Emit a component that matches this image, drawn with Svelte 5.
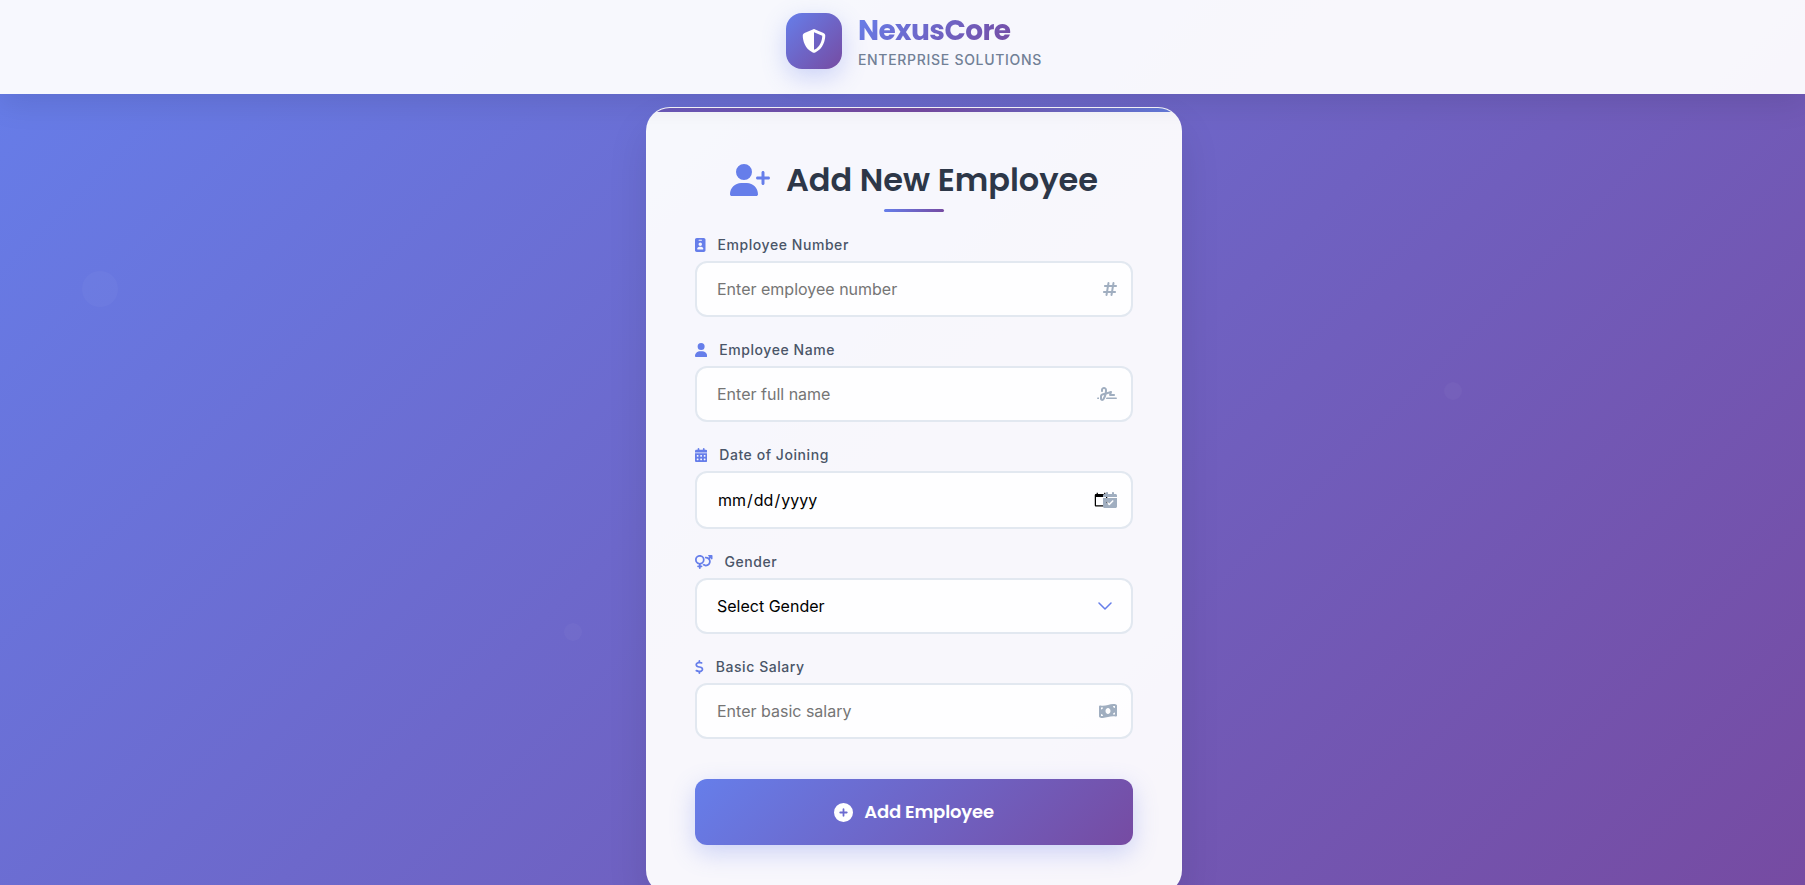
<script>
  const icons = {
    shield: { w: 512, d: 'M256 0c4.6 0 9.2 1 13.4 2.9L457.7 82.8c22 9.3 38.4 31 38.3 57.2c-.5 99.2-41.3 280.7-213.6 363.2c-16.7 8-36.1 8-52.8 0C57.3 420.7 16.5 239.2 16 140c-.1-26.2 16.3-47.9 38.3-57.2L242.7 2.9C246.8 1 251.4 0 256 0zm0 66.8V444.8C394 378 431.1 230.1 432 141.4L256 66.8z' },
    userPlus: { w: 640, d: 'M96 128a128 128 0 1 1 256 0A128 128 0 1 1 96 128zM0 482.3C0 383.8 79.8 304 178.3 304h91.4C368.2 304 448 383.8 448 482.3c0 16.4-13.3 29.7-29.7 29.7H29.7C13.3 512 0 498.7 0 482.3zM504 312V248H440c-13.3 0-24-10.7-24-24s10.7-24 24-24h64V136c0-13.3 10.7-24 24-24s24 10.7 24 24v64h64c13.3 0 24 10.7 24 24s-10.7 24-24 24H552v64c0 13.3-10.7 24-24 24s-24-10.7-24-24z' },
    badge: { w: 384, d: 'M64 0C28.7 0 0 28.7 0 64V448c0 35.3 28.7 64 64 64H320c35.3 0 64-28.7 64-64V64c0-35.3-28.7-64-64-64H64zm96 320h64c44.2 0 80 35.8 80 80c0 8.8-7.2 16-16 16H96c-8.8 0-16-7.2-16-16c0-44.2 35.8-80 80-80zm-32-96a64 64 0 1 1 128 0 64 64 0 1 1 -128 0zM144 64h96c8.8 0 16 7.2 16 16s-7.2 16-16 16H144c-8.8 0-16-7.2-16-16s7.2-16 16-16z' },
    user: { w: 448, d: 'M224 256A128 128 0 1 0 224 0a128 128 0 1 0 0 256zm-45.7 48C79.8 304 0 383.8 0 482.3C0 498.7 13.3 512 29.7 512H418.3c16.4 0 29.7-13.3 29.7-29.7C448 383.8 368.2 304 269.7 304H178.3z' },
    calendar: { w: 448, d: 'M128 0c17.7 0 32 14.3 32 32V64H288V32c0-17.7 14.3-32 32-32s32 14.3 32 32V64h48c26.5 0 48 21.5 48 48v48H0V112C0 85.5 21.5 64 48 64H96V32c0-17.7 14.3-32 32-32zM0 192H448V464c0 26.5-21.5 48-48 48H48c-26.5 0-48-21.5-48-48V192zm64 80v32c0 8.8 7.2 16 16 16h32c8.8 0 16-7.2 16-16V272c0-8.8-7.2-16-16-16H80c-8.8 0-16 7.2-16 16zm128 0v32c0 8.8 7.2 16 16 16h32c8.8 0 16-7.2 16-16V272c0-8.8-7.2-16-16-16H208c-8.8 0-16 7.2-16 16zm144-16c-8.8 0-16 7.2-16 16v32c0 8.8 7.2 16 16 16h32c8.8 0 16-7.2 16-16V272c0-8.8-7.2-16-16-16H336zM64 400v32c0 8.8 7.2 16 16 16h32c8.8 0 16-7.2 16-16V400c0-8.8-7.2-16-16-16H80c-8.8 0-16 7.2-16 16zm144-16c-8.8 0-16 7.2-16 16v32c0 8.8 7.2 16 16 16h32c8.8 0 16-7.2 16-16V400c0-8.8-7.2-16-16-16H208zm112 16v32c0 8.8 7.2 16 16 16h32c8.8 0 16-7.2 16-16V400c0-8.8-7.2-16-16-16H336c-8.8 0-16 7.2-16 16z' },
    gender: { w: 640, d: 'M176 288a112 112 0 1 0 0-224 112 112 0 1 0 0 224zM352 176c0 86.3-62.1 158.1-144 173.1V384h32c17.7 0 32 14.3 32 32s-14.3 32-32 32H208v32c0 17.7-14.3 32-32 32s-32-14.3-32-32V448H112c-17.7 0-32-14.3-32-32s14.3-32 32-32h32V349.1C62.1 334.1 0 262.3 0 176C0 78.8 78.8 0 176 0s176 78.8 176 176zM271.9 360.6c19.3-10.1 36.9-23.1 52.1-38.4c20 18.5 46.7 29.8 76.1 29.8c61.9 0 112-50.1 112-112s-50.1-112-112-112c-7.2 0-14.3 .7-21.1 2c-4.9-21.5-13-41.7-24-60.2C369.3 66 384.4 64 400 64c37 0 71.4 11.4 99.8 31l20.6-20.6L487 41c-6.9-6.9-8.9-17.2-5.2-26.2S494.3 0 504 0H616c13.3 0 24 10.7 24 24V136c0 9.7-5.8 18.5-14.8 22.2s-19.3 1.7-26.2-5.2l-33.4-33.4L545 140.2c19.5 28.4 31 62.7 31 99.8c0 97.2-78.8 176-176 176c-50.5 0-96-21.3-128.1-55.4z' },
    dollar: { w: 320, d: 'M160 0c17.7 0 32 14.3 32 32V67.7c1.6 .2 3.1 .4 4.7 .7c.4 .1 .7 .1 1.1 .2l48 8.8c17.4 3.2 28.9 19.9 25.7 37.2s-19.9 28.9-37.2 25.7l-47.5-8.7c-31.3-4.6-58.9-1.5-78.3 6.2s-27.2 18.3-29 28.1c-2 10.7-.5 16.7 1.2 20.4c1.8 3.9 5.5 8.3 12.8 13.2c16.3 10.7 41.3 17.7 73.7 26.3l2.9 .8c28.6 7.6 63.6 16.8 89.6 33.8c14.2 9.3 27.6 21.9 35.9 39.5c8.5 17.9 10.3 37.9 6.4 59.2c-6.9 38-33.1 63.4-65.6 76.7c-13.7 5.6-28.6 9.2-44.4 11V480c0 17.7-14.3 32-32 32s-32-14.3-32-32V445.1c-.4-.1-.9-.1-1.3-.2l-.2 0c-24.4-3.8-64.5-14.3-91.5-26.3c-16.1-7.2-23.4-26.1-16.2-42.2s26.1-23.4 42.2-16.2c20.9 9.3 55.3 18.5 75.2 21.6c31.9 4.7 58.2 2 76-5.3c16.9-6.9 24.6-16.9 26.8-28.9c1.9-10.6 .4-16.7-1.3-20.4c-1.9-4-5.6-8.4-13-13.3c-16.4-10.7-41.5-17.7-74-26.3l-2.8-.7C119.4 279.3 84.4 270 58.4 253c-14.2-9.3-27.5-22-35.8-39.6c-8.4-17.9-10.1-37.9-6.1-59.2C23.7 116 52.3 91.2 84.8 78.3c13.3-5.3 27.9-8.9 43.2-11V32c0-17.7 14.3-32 32-32z' },
    hash: { w: 448, d: 'M181.3 32.4c17.4 2.9 29.2 19.4 26.3 36.8L197.8 128h95.1l11.5-69.3c2.9-17.4 19.4-29.2 36.8-26.3s29.2 19.4 26.3 36.8L357.8 128H416c17.7 0 32 14.3 32 32s-14.3 32-32 32H347.1L325.8 320H384c17.7 0 32 14.3 32 32s-14.3 32-32 32H315.1l-11.5 69.3c-2.9 17.4-19.4 29.2-36.8 26.3s-29.2-19.4-26.3-36.8l9.8-58.7H155.1l-11.5 69.3c-2.9 17.4-19.4 29.2-36.8 26.3s-29.2-19.4-26.3-36.8L90.2 384H32c-17.7 0-32-14.3-32-32s14.3-32 32-32h68.9l21.3-128H64c-17.7 0-32-14.3-32-32s14.3-32 32-32h68.9l11.5-69.3c2.9-17.4 19.4-29.2 36.8-26.3zM187.1 192L165.8 320h95.1l21.3-128H187.1z' },
    signature: { w: 640, d: 'M192 128c0-17.7 14.3-32 32-32s32 14.3 32 32v7.8c0 27.7-2.4 55.3-7.1 82.5l-84.4 25.3c-40.6 12.2-68.4 49.6-68.4 92v71.9c0 40 32.5 72.5 72.5 72.5c26 0 50-13.9 62.9-36.5l13.9-24.3c26.8-47 46.5-97.7 58.4-150.5l94.4-28.3-12.5 37.5c-3.3 9.8-1.6 20.5 4.4 28.8s15.7 13.3 26 13.3H544c17.7 0 32-14.3 32-32s-14.3-32-32-32H460.4l18-53.9c3.8-11.3 .9-23.8-7.4-32.4s-20.7-11.8-32.2-8.4L316.4 198.1c2.4-20.7 3.6-41.4 3.6-62.3V128c0-53-43-96-96-96s-96 43-96 96v32c0 17.7 14.3 32 32 32s32-14.3 32-32V128zm-9.2 177l49-14.7c-10.4 33.8-24.5 66.4-42.1 97.2l-13.9 24.3c-1.5 2.6-4.3 4.3-7.4 4.3c-4.7 0-8.5-3.8-8.5-8.5V335.6c0-14.1 9.3-26.6 22.8-30.7zM24 368c-13.3 0-24 10.7-24 24s10.7 24 24 24H64.3c-.2-2.8-.3-5.6-.3-8.5V368H24zm592 48c13.3 0 24-10.7 24-24s-10.7-24-24-24H305.9c-6.7 16.3-14.2 32.3-22.3 48H616z' },
    calendarCheck: { w: 448, d: 'M128 0c17.7 0 32 14.3 32 32V64H288V32c0-17.7 14.3-32 32-32s32 14.3 32 32V64h48c26.5 0 48 21.5 48 48v48H0V112C0 85.5 21.5 64 48 64H96V32c0-17.7 14.3-32 32-32zM0 192H448V464c0 26.5-21.5 48-48 48H48c-26.5 0-48-21.5-48-48V192zM329 305c9.4-9.4 9.4-24.6 0-33.9s-24.6-9.4-33.9 0l-95 95-47-47c-9.4-9.4-24.6-9.4-33.9 0s-9.4 24.6 0 33.9l64 64c9.4 9.4 24.6 9.4 33.9 0L329 305z' },
    money: { w: 576, d: 'M0 112.5V422.3c0 18 10.1 35 27 41.3c87 32.5 174 10.3 261-11.9c79.8-20.3 159.6-40.7 239.3-18.9c23 6.3 48.7-9.5 48.7-33.4V89.7c0-18-10.1-35-27-41.3C462 15.9 375 38.1 288 60.3C208.2 80.6 128.4 100.9 48.7 79.1C25.6 72.8 0 88.6 0 112.5zM288 352c-44.2 0-80-43-80-96s35.8-96 80-96s80 43 80 96s-35.8 96-80 96zM64 352c35.3 0 64 28.7 64 64H64V352zm64-208c0 35.3-28.7 64-64 64V144h64zM512 304v64H448c0-35.3 28.7-64 64-64zM448 96h64v64c-35.3 0-64-28.7-64-64z' },
    plus: { w: 512, d: 'M256 512A256 256 0 1 0 256 0a256 256 0 1 0 0 512zM232 344V280H168c-13.3 0-24-10.7-24-24s10.7-24 24-24h64V168c0-13.3 10.7-24 24-24s24 10.7 24 24v64h64c13.3 0 24 10.7 24 24s-10.7 24-24 24H280v64c0 13.3-10.7 24-24 24s-24-10.7-24-24z' }
  };

  const fields = [
    { id: 'number', label: 'Employee Number', type: 'text', icon: 'badge', trail: 'hash', placeholder: 'Enter employee number' },
    { id: 'name', label: 'Employee Name', type: 'text', icon: 'user', trail: 'signature', placeholder: 'Enter full name' },
    { id: 'joined', label: 'Date of Joining', type: 'date', icon: 'calendar', trail: 'calendarCheck' },
    { id: 'gender', label: 'Gender', type: 'select', icon: 'gender' },
    { id: 'salary', label: 'Basic Salary', type: 'text', icon: 'dollar', trail: 'money', placeholder: 'Enter basic salary' }
  ];
</script>

{#snippet icon(name)}
  <svg class="icon" viewBox="0 0 {icons[name].w} 512" aria-hidden="true"><path d={icons[name].d} /></svg>
{/snippet}

<div class="page">
  <span class="bubble large"></span>
  <span class="bubble right"></span>
  <span class="bubble low"></span>

  <header>
    <div class="logo">{@render icon('shield')}</div>
    <div class="brand">
      <span class="name">NexusCore</span>
      <span class="tagline">ENTERPRISE SOLUTIONS</span>
    </div>
  </header>

  <main>
    <form class="card" onsubmit={(e) => e.preventDefault()}>
      <h1>{@render icon('userPlus')}<span>Add New Employee</span></h1>
      {#each fields as f}
        <div class="field">
          <label for={f.id}>{@render icon(f.icon)}<span>{f.label}</span></label>
          <div class="control">
            {#if f.type === 'select'}
              <select id={f.id}>
                <option>Select Gender</option>
                <option>Male</option>
                <option>Female</option>
                <option>Other</option>
              </select>
              <svg class="chevron" viewBox="0 0 14 8" aria-hidden="true"><path d="M1 1l6 6 6-6" /></svg>
            {:else}
              <input id={f.id} type={f.type} placeholder={f.placeholder} />
              <span class="trail">{@render icon(f.trail)}</span>
            {/if}
          </div>
        </div>
      {/each}
      <button type="submit">{@render icon('plus')}<span>Add Employee</span></button>
    </form>
  </main>
</div>

<style>
  :global(body) {
    margin: 0;
  }
  .page {
    position: relative;
    box-sizing: border-box;
    height: 100vh;
    overflow-x: hidden;
    overflow-y: auto;
    scrollbar-width: none;
    background: linear-gradient(135deg, #667eea 0%, #764ba2 100%);
    font-family: Inter, "Liberation Sans", sans-serif;
    color: #2d3748;
  }
  .icon {
    display: block;
    height: 1em;
    fill: currentColor;
    flex: none;
  }
  .bubble {
    position: absolute;
    width: 18px;
    height: 18px;
    border-radius: 50%;
    background: rgba(255, 255, 255, 0.03);
  }
  .bubble.large {
    left: 82px;
    top: 271px;
    width: 36px;
    height: 36px;
  }
  .bubble.right {
    left: 80%;
    top: 382px;
  }
  .bubble.low {
    left: 564px;
    top: 623px;
  }
  header {
    position: relative;
    z-index: 2;
    display: flex;
    justify-content: center;
    gap: 16px;
    padding: 13px 24px 23px 47px;
    background: rgba(255, 255, 255, 0.95);
    box-shadow: 0 8px 32px rgba(0, 0, 0, 0.1);
  }
  .logo {
    display: flex;
    align-items: center;
    justify-content: center;
    width: 56px;
    height: 56px;
    border-radius: 16px;
    background: linear-gradient(135deg, #667eea, #764ba2);
    box-shadow: 0 8px 24px rgba(102, 126, 234, 0.3);
    color: #fff;
    font-size: 24px;
  }
  .brand {
    display: flex;
    flex-direction: column;
    align-items: flex-start;
  }
  .name {
    background: linear-gradient(135deg, #667eea, #764ba2);
    background-clip: text;
    color: transparent;
    font: 700 28px/36px Poppins, Inter, sans-serif;
    letter-spacing: -0.02em;
  }
  .tagline {
    color: #718096;
    font-size: 14px;
    font-weight: 500;
    line-height: 22px;
    letter-spacing: 0.05em;
  }
  main {
    display: flex;
    justify-content: center;
    padding: 13px 24px 48px 47px;
  }
  .card {
    position: relative;
    box-sizing: border-box;
    width: 100%;
    max-width: 536px;
    padding: 48px;
    overflow: hidden;
    border: 1px solid rgba(255, 255, 255, 0.2);
    border-radius: 24px;
    background: rgba(255, 255, 255, 0.95);
    box-shadow: 0 20px 40px rgba(0, 0, 0, 0.1);
  }
  .card::before {
    content: "";
    position: absolute;
    inset: 0 0 auto;
    height: 4px;
    background: linear-gradient(90deg, #6a5abc, #764ba2 42%, #764ba2 52%, #627cdc);
  }
  h1 {
    position: relative;
    display: flex;
    align-items: center;
    justify-content: center;
    gap: 16px;
    margin: 0 0 30px;
    color: #2d3748;
    font: 600 32px/48px Poppins, Inter, sans-serif;
  }
  h1 .icon {
    color: #667eea;
  }
  h1::after {
    content: "";
    position: absolute;
    left: calc(50% - 30px);
    bottom: -8px;
    width: 60px;
    height: 3px;
    border-radius: 2px;
    background: linear-gradient(90deg, #667eea, #764ba2);
  }
  .field {
    margin-bottom: 22px;
  }
  label {
    display: flex;
    align-items: center;
    gap: 12px;
    margin-bottom: 5px;
    color: #4a5568;
    font-size: 14px;
    font-weight: 500;
    line-height: 22px;
    letter-spacing: 0.04em;
  }
  label .icon {
    color: #667eea;
  }
  .control {
    position: relative;
    display: flex;
  }
  input,
  select {
    appearance: none;
    box-sizing: border-box;
    width: 100%;
    min-height: 56px;
    padding: 16px 20px;
    border: 2px solid #e2e8f0;
    border-radius: 12px;
    background: rgba(255, 255, 255, 0.8);
    color: #000;
    font: 400 16px Inter, sans-serif;
  }
  input[type="date"] {
    min-height: 58px;
  }
  input::placeholder {
    color: #757575;
  }
  .trail {
    position: absolute;
    top: 50%;
    right: 16px;
    transform: translateY(-50%);
    color: #a0aec0;
    font-size: 16px;
    pointer-events: none;
  }
  .chevron {
    position: absolute;
    top: calc(50% - 4px);
    right: 21px;
    width: 14px;
    height: 8px;
    fill: none;
    stroke: #667eea;
    stroke-width: 1.5;
    stroke-linecap: round;
    stroke-linejoin: round;
    pointer-events: none;
  }
  button {
    display: flex;
    align-items: center;
    justify-content: center;
    gap: 11px;
    width: 100%;
    height: 66px;
    margin-top: 40px;
    padding: 0;
    border: 0;
    border-radius: 12px;
    background: linear-gradient(135deg, #667eea, #764ba2);
    box-shadow: 0 8px 24px rgba(102, 126, 234, 0.3);
    color: #fff;
    font: 600 18px/28px Poppins, Inter, sans-serif;
    letter-spacing: -0.01em;
    cursor: pointer;
  }
  button .icon {
    height: 19px;
  }
</style>
